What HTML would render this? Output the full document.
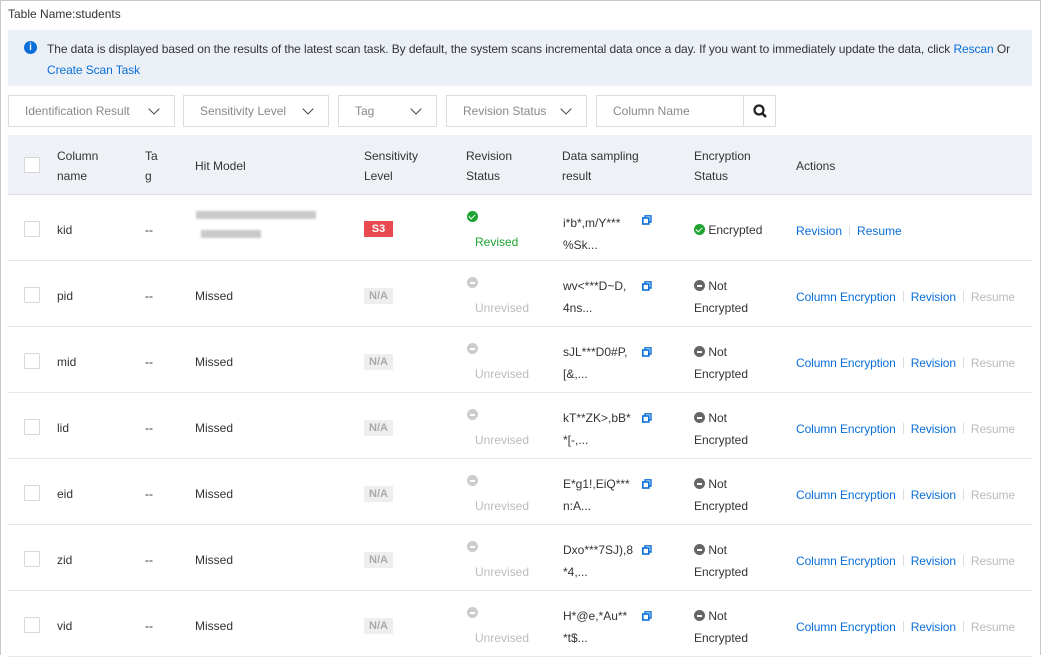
<!DOCTYPE html>
<html><head><meta charset="utf-8"><style>
*{margin:0;padding:0;box-sizing:border-box}
body{width:1041px;height:655px;overflow:hidden;background:#fff;font-family:"Liberation Sans",sans-serif;font-size:12px;color:#333;position:relative}
.frame{position:absolute;left:0;top:0;width:1041px;height:655px;border:1px solid #c8c8c8;border-bottom:none}
.a{position:absolute;white-space:nowrap}
.info{position:absolute;left:8px;top:30px;width:1024px;height:56px;background:#ebf0f7;letter-spacing:-0.09px}
.sel{position:absolute;top:95px;height:32px;border:1px solid #dcdcdc;color:#888;padding-left:16px;line-height:31px}
.chev{position:absolute;right:16px;top:9px;width:8px;height:8px;border-right:1.5px solid #444;border-bottom:1.5px solid #444;transform:rotate(45deg)}
.thead{position:absolute;left:8px;top:135px;width:1024px;height:60px;background:#eef1f6;border-bottom:1px solid #dde1e6}
.row{position:absolute;left:8px;width:1024px;height:66px;border-bottom:1px solid #e6e6e6}
.cb{position:absolute;left:16px;width:16px;height:16px;border:1px solid #d8d8d8;background:#fff;border-radius:1px}
.h{font-weight:normal;color:#333;line-height:20px}
.link{color:#0a6fd8}
.dis{color:#bbb}
.sep{display:inline-block;width:1px;height:11px;background:#ddd;margin:0 7px;vertical-align:-1px}
.na{position:absolute;left:356px;width:29px;height:16px;background:#eee;color:#aaa;font-weight:bold;font-size:11px;text-align:center;line-height:16px}
.dot{display:inline-block;width:11px;height:11px;border-radius:50%;vertical-align:-1px;position:relative}
.grey{background:#666}.grey::after,.lg::after{content:"";position:absolute;left:3px;top:5px;width:5px;height:1.5px;background:#fff}
.lg{background:#ccc}
.green{background:#1fa332}
.green::after{content:"";position:absolute;left:3px;top:2px;width:3px;height:5px;border-right:1.5px solid #fff;border-bottom:1.5px solid #fff;transform:rotate(45deg)}
.copy{position:absolute;left:634px;width:10px;height:10px}
</style></head><body>
<div class="frame"></div>
<div class="a" style="left:8px;top:7px;color:#333">Table Name:students</div>
<div class="info">
<div class="a" style="left:16px;top:11px;width:13px;height:13px;border-radius:50%;background:#0a6fd8;color:#fff;font-size:10px;font-weight:bold;text-align:center;line-height:13px">i</div>
<div class="a" style="left:39px;top:12px;color:#333">The data is displayed based on the results of the latest scan task. By default, the system scans incremental data once a day. If you want to immediately update the data, click <span class="link">Rescan</span> Or</div>
<div class="a link" style="left:39px;top:33px">Create Scan Task</div>
</div>
<div class="sel" style="left:8px;width:167px">Identification Result<span class="chev"></span></div>
<div class="sel" style="left:183px;width:146px">Sensitivity Level<span class="chev"></span></div>
<div class="sel" style="left:338px;width:99px">Tag<span class="chev"></span></div>
<div class="sel" style="left:446px;width:141px">Revision Status<span class="chev"></span></div>
<div class="sel" style="left:596px;width:148px">Column Name</div>
<div class="sel" style="left:743px;width:33px;padding:0"><svg width="33" height="30" viewBox="0 0 33 30"><circle cx="15" cy="14" r="4.5" fill="none" stroke="#222" stroke-width="2.2"/><line x1="18.5" y1="17.5" x2="22" y2="21" stroke="#222" stroke-width="2.6"/></svg></div>
<div class="thead">
<div class="cb" style="top:22px"></div>
<div class="a h" style="left:49px;top:11px">Column<br>name</div>
<div class="a h" style="left:137px;top:11px">Ta<br>g</div>
<div class="a h" style="left:187px;top:21px">Hit Model</div>
<div class="a h" style="left:356px;top:11px">Sensitivity<br>Level</div>
<div class="a h" style="left:458px;top:11px">Revision<br>Status</div>
<div class="a h" style="left:554px;top:11px">Data sampling<br>result</div>
<div class="a h" style="left:686px;top:11px">Encryption<br>Status</div>
<div class="a h" style="left:788px;top:21px">Actions</div>
</div>

<div class="row" style="top:195px">
<div class="cb" style="top:26px"></div>
<div class="a" style="left:49px;top:28px">kid</div>
<div class="a" style="left:137px;top:28px">--</div>
<div class="a" style="left:188px;top:16px;width:120px;height:8px;background:#c9c9c9;filter:blur(1px)"></div>
<div class="a" style="left:193px;top:35px;width:60px;height:8px;background:#c9c9c9;filter:blur(1px)"></div>
<div class="a" style="left:356px;top:26px;width:29px;height:16px;background:#e84a4f;color:#fff;font-weight:bold;font-size:11px;text-align:center;line-height:16px">S3</div>
<div class="a" style="left:459px;top:15px"><span class="dot green"></span></div>
<div class="a" style="left:467px;top:40px;color:#1fa332">Revised</div>
<div class="a" style="left:555px;top:17px;line-height:22px">i*b*,m/Y***<br>%Sk...</div>
<svg class="copy" style="top:20px" viewBox="0 0 10 10"><rect x="0.8" y="3" width="6" height="6" fill="none" stroke="#0a6fd8" stroke-width="1.6"/><path d="M3 3V0.8h6V7H7" fill="none" stroke="#0a6fd8" stroke-width="1.4"/></svg>
<div class="a" style="left:686px;top:28px"><span class="dot green"></span> Encrypted</div>
<div class="a" style="left:788px;top:29px"><span class="link">Revision</span><span class="sep"></span><span class="link">Resume</span></div>
</div>

<div id="rows"></div>
<script>
var d=[["pid","wv&lt;***D~D,","4ns..."],["mid","sJL***D0#P,","[&amp;,..."],["lid","kT**ZK&gt;,bB*","*[-,..."],["eid","E*g1!,EiQ***","n:A..."],["zid","Dxo***7SJ),8","*4,..."],["vid","H*@e,*Au**","*t$..."]];
var h="";
d.forEach(function(r,i){var t=261+66*i;
h+='<div class="row" style="top:'+t+'px"><div class="cb" style="top:26px"></div>'+
'<div class="a" style="left:49px;top:28px">'+r[0]+'</div><div class="a" style="left:137px;top:28px">--</div>'+
'<div class="a" style="left:187px;top:28px">Missed</div><div class="na" style="top:27px">N/A</div>'+
'<div class="a" style="left:459px;top:15px"><span class="dot lg"></span></div><div class="a dis" style="left:467px;top:40px">Unrevised</div>'+
'<div class="a" style="left:555px;top:14px;line-height:22px">'+r[1]+'<br>'+r[2]+'</div>'+
'<svg class="copy" style="top:20px" viewBox="0 0 10 10"><rect x="0.8" y="3" width="6" height="6" fill="none" stroke="#0a6fd8" stroke-width="1.6"/><path d="M3 3V0.8h6V7H7" fill="none" stroke="#0a6fd8" stroke-width="1.4"/></svg>'+
'<div class="a" style="left:686px;top:14px;line-height:22px"><span class="dot grey"></span> Not<br>Encrypted</div>'+
'<div class="a" style="left:788px;top:29px;letter-spacing:-0.1px"><span class="link">Column Encryption</span><span class="sep"></span><span class="link">Revision</span><span class="sep"></span><span class="dis">Resume</span></div></div>';});
document.getElementById("rows").innerHTML=h;
</script>
</body></html>
